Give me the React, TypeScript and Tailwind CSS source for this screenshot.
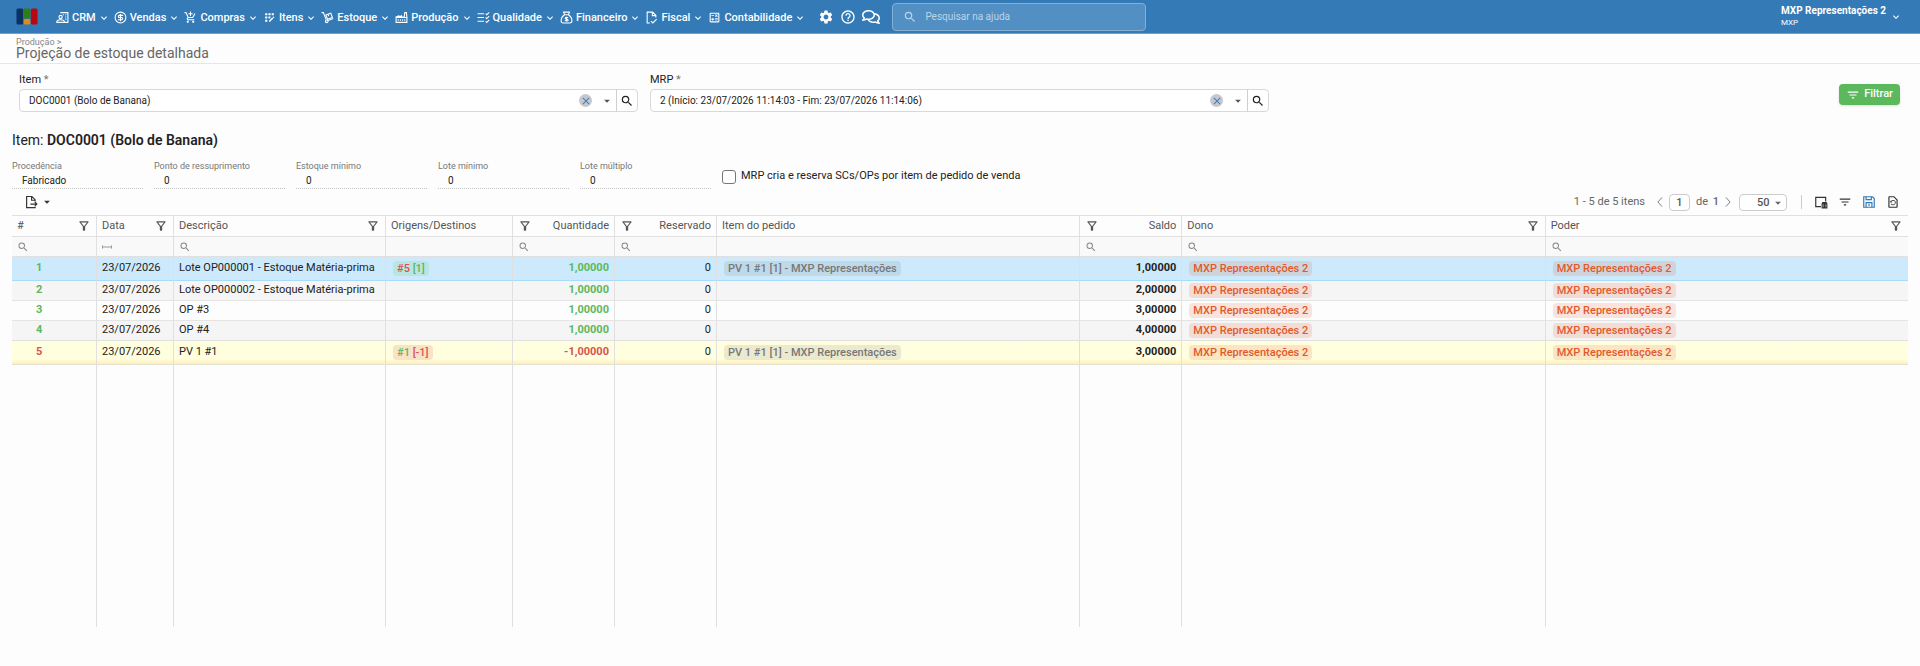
import type { ReactNode } from "react";
import {
  MdArrowDropDown,
  MdClose,
  MdFilterList,
  MdHelpOutline,
  MdKeyboardArrowDown,
  MdOutlineAddShoppingCart,
  MdOutlineAppRegistration,
  MdOutlineCalculate,
  MdOutlineFilterAlt,
  MdOutlineRestorePage,
  MdSearch,
  MdSettings,
} from "react-icons/md";
import { FaRegComments } from "react-icons/fa";
import { LuCircleDollarSign } from "react-icons/lu";

function Svg({ children, className = "size-[13px]" }: { children: ReactNode; className?: string }) {
  return (
    <svg
      viewBox="0 0 24 24"
      fill="none"
      stroke="currentColor"
      strokeWidth="2"
      className={className}
      aria-hidden="true"
    >
      {children}
    </svg>
  );
}

const CrmIcon = () => (
  <Svg>
    <path d="M8 3h14v18H14" />
    <circle cx="8.5" cy="11" r="3" />
    <path d="M1.5 21v-1c0-2.5 3.5-4 7-4s7 1.500 7 4v1z" />
    <path d="M12.500 7h2M17 7h2M17 11h2M17 15h2" />
  </Svg>
);

const TrolleyIcon = () => (
  <Svg>
    <path d="M1 3h3.500l5 13M13 17.500l9.500-3.500" />
    <circle cx="10.500" cy="19" r="2.500" />
    <path d="M9 7.500l9-3.500 3 8-9 3.300zM13 6l1.200 3.500" />
  </Svg>
);

const FactoryIcon = () => (
  <Svg>
    <path d="M2 21V11l5-2v2l5-2v2h5l1-8h3l1 8v10z" />
    <path d="M2 12h20M6 15v3M10 15v3M14 15v3M18 15v3" />
  </Svg>
);

const ChecksIcon = () => (
  <Svg>
    <path d="M1 5h12M1 12h12M1 19h12" />
    <path d="M16 5l2 2 4.500-4.500M16 12l2 2 4.500-4.500M16 19l2 2 4.500-4.500" />
  </Svg>
);

const MoneyBagIcon = () => (
  <Svg>
    <path d="M8.500 7L6.500 2h11l-2 5zM8.500 7C4 10 2 14 2 18c0 3 1.500 4 4 4h12c2.500 0 4-1 4-4 0-4-2-8-6.500-11" />
    <path d="M15 12.500c-1-1-5.500-1.200-5.500 1 0 2.500 5.500 1.200 5.500 3.500 0 2-4.500 2-6 .5M12 10.500v9" />
  </Svg>
);

const FiscalIcon = () => (
  <Svg>
    <path d="M9 22H4V2h10l6 6v4M13.500 2v6.500H20" />
    <path d="M11 18.500l3.500 3.500 7-7" />
  </Svg>
);

const ExportIcon = () => (
  <Svg className="size-3.5">
    <path d="M19 11V8l-5.500-5.500H4.500v19H19v-1.500M13 3v6h6" />
    <path d="M11 15.500h11M18.500 12l3.500 3.500-3.500 3.500" />
  </Svg>
);

const ColumnsIcon = () => (
  <Svg className="size-3.5">
    <path d="M12 20H3V4h17v7" />
    <path d="M14 15h8v7h-8zM15 13h6v1h-6zM17 15v7M19 15v7" />
  </Svg>
);

const SaveIcon = () => (
  <Svg className="size-3.5">
    <path d="M3 3h15l3 3v15H3z" />
    <path d="M7 3v5h9V3M7 21v-8h10v8" />
    <path d="M12 15v4" />
  </Svg>
);

const menus = [
  { label: "CRM", icon: <CrmIcon /> },
  { label: "Vendas", icon: <LuCircleDollarSign className="size-[13px]" /> },
  { label: "Compras", icon: <MdOutlineAddShoppingCart className="size-[13px]" /> },
  { label: "Itens", icon: <MdOutlineAppRegistration className="size-[13px]" /> },
  { label: "Estoque", icon: <TrolleyIcon /> },
  { label: "Produção", icon: <FactoryIcon /> },
  { label: "Qualidade", icon: <ChecksIcon /> },
  { label: "Financeiro", icon: <MoneyBagIcon /> },
  { label: "Fiscal", icon: <FiscalIcon /> },
  { label: "Contabilidade", icon: <MdOutlineCalculate className="size-[13px]" /> },
];

function Navbar() {
  return (
    <header className="flex h-[34px] items-center border-b border-[#8e98a8] bg-[#337ab7] pr-[18px] pl-4 text-white">
      <a href="#" aria-label="Início" className="mr-[18px]">
        <svg viewBox="0 0 23 17" preserveAspectRatio="none" className="h-[17px] w-[22px]" aria-hidden="true">
          <rect x="0.500" y="0.500" width="7" height="16" rx="1.500" fill="#0b3263" />
          <rect x="8" y="0.500" width="7" height="10" rx="1" fill="#2f7d15" />
          <rect x="8" y="11" width="7" height="5.500" rx="1.500" fill="#e08a1e" />
          <rect x="15.500" y="0.500" width="7" height="16" rx="1.500" fill="#b80713" />
        </svg>
      </a>
      <nav className="flex items-center gap-1 pt-0.5">
        {menus.map((m) => (
          <button key={m.label} type="button" className="flex items-center text-[11px] leading-4 font-medium">
            <span className="mr-[3px]">{m.icon}</span>
            {m.label}
            <MdKeyboardArrowDown className="ml-0.5 size-3" />
          </button>
        ))}
      </nav>
      <div className="ml-3 flex items-center gap-1.5">
        <button type="button" aria-label="Configurações">
          <MdSettings className="size-4" />
        </button>
        <button type="button" aria-label="Ajuda">
          <MdHelpOutline className="size-4" />
        </button>
        <button type="button" aria-label="Mensagens">
          <FaRegComments className="size-[18px]" />
        </button>
      </div>
      <label className="ml-3 flex h-7 w-[254px] items-center gap-2 rounded border border-[#85b0d6] bg-[#528fc3] px-2.5 text-[#bcd5ea]">
        <MdSearch className="size-3.5 shrink-0" />
        <input
          type="text"
          aria-label="Pesquisar na ajuda"
          placeholder="Pesquisar na ajuda"
          className="h-4 w-full text-[10px] leading-4 outline-none placeholder:text-[#bcd5ea]"
        />
      </label>
      <button type="button" className="ml-auto flex items-center gap-1 text-left">
        <span className="leading-3">
          <span className="block text-[10px] font-bold">MXP Representações 2</span>
          <span className="block text-[8px]">MXP</span>
        </span>
        <MdKeyboardArrowDown className="size-3" />
      </button>
    </header>
  );
}

function Combo({ id, label, value }: { id: string; label: string; value: string }) {
  return (
    <div className="w-[619px]">
      <label htmlFor={id} className="block text-[11px] leading-4">
        {label} <span className="text-[#777]">*</span>
      </label>
      <div className="mt-px flex h-[23px] items-stretch rounded border border-[#d8d8d8] bg-white">
        <input
          id={id}
          type="text"
          defaultValue={value}
          className="min-w-0 flex-1 pl-[9px] text-[10px] outline-none"
        />
        <button
          type="button"
          aria-label="Limpar"
          className="mr-2 flex size-[13px] items-center justify-center self-center rounded-full bg-[#c6c8cb] text-[#3f7fc4]"
        >
          <MdClose className="size-3" />
        </button>
        <button type="button" aria-label="Abrir lista" className="mr-0.5 text-[#555]">
          <MdArrowDropDown className="size-3.5" />
        </button>
        <button
          type="button"
          aria-label="Pesquisar"
          className="flex w-[21px] items-center justify-center border-l border-[#cfcfcf]"
        >
          <MdSearch className="size-3.5" />
        </button>
      </div>
    </div>
  );
}

const infos = [
  { id: "procedencia", label: "Procedência", value: "Fabricado" },
  { id: "ressuprimento", label: "Ponto de ressuprimento", value: "0" },
  { id: "estoque-minimo", label: "Estoque mínimo", value: "0" },
  { id: "lote-minimo", label: "Lote mínimo", value: "0" },
  { id: "lote-multiplo", label: "Lote múltiplo", value: "0" },
];

function ItemInfo() {
  return (
    <div className="mt-2.5 flex items-center gap-[11px]">
      {infos.map((f) => (
        <div key={f.id} className="w-[131px] border-b border-dotted border-[#c4c4c4]">
          <label htmlFor={f.id} className="block text-[9px] leading-3 text-[#777]">
            {f.label}
          </label>
          <input
            id={f.id}
            type="text"
            readOnly
            value={f.value}
            className="block h-4 w-full pl-2.5 text-[10px] outline-none"
          />
        </div>
      ))}
      <label className="mt-1 flex items-center gap-[5px] text-[11px]">
        <input
          type="checkbox"
          className="size-3.5 appearance-none rounded-[3px] border border-[#767676] bg-white"
        />
        MRP cria e reserva SCs/OPs por item de pedido de venda
      </label>
    </div>
  );
}

function GridToolbar() {
  return (
    <div className="flex h-[26px] items-center text-[#333]">
      <button type="button" aria-label="Exportar" className="ml-3 flex items-center gap-0.5">
        <ExportIcon />
        <MdArrowDropDown className="size-3.5" />
      </button>
      <div className="ml-auto flex items-center text-[11px] text-[#666]">
        1 - 5 de 5 itens
        <button type="button" aria-label="Página anterior" className="mr-1 ml-2.5">
          <Svg className="size-2.5">
            <path d="M17 1L7 12l10 11" />
          </Svg>
        </button>
        <input
          type="text"
          aria-label="Página"
          defaultValue="1"
          className="h-[17px] w-[21px] rounded border border-[#ccc] bg-white text-center font-medium text-[#555]"
        />
        <span className="ml-1.5">
          de <b className="ml-0.5 font-medium">1</b>
        </span>
        <button type="button" aria-label="Próxima página" className="mr-1.5 ml-1">
          <Svg className="size-2.5">
            <path d="M7 1l10 11L7 23" />
          </Svg>
        </button>
        <div className="relative">
          <select
            aria-label="Itens por página"
            className="block h-[17px] w-12 appearance-none rounded border border-[#ccc] bg-white pl-[17px] font-medium text-[#555]"
          >
            <option>50</option>
          </select>
          <MdArrowDropDown className="pointer-events-none absolute top-0.5 right-0.5 size-3.5" />
        </div>
      </div>
      <div className="ml-3.5 flex items-center gap-2.5 border-l border-[#ccc] pl-3">
        <button type="button" aria-label="Colunas">
          <ColumnsIcon />
        </button>
        <button type="button" aria-label="Filtros">
          <MdFilterList className="size-3.5" />
        </button>
        <button type="button" aria-label="Salvar" className="text-[#337ab7]">
          <SaveIcon />
        </button>
        <button type="button" aria-label="Restaurar" className="mr-2">
          <MdOutlineRestorePage className="size-3.5" />
        </button>
      </div>
    </div>
  );
}

// columns without a width share what is left of the table
const columns = [
  { title: "#", width: "w-[84px]", filter: true, search: "text" },
  { title: "Data", width: "w-[77px]", filter: true, search: "range" },
  { title: "Descrição", width: "w-[212px]", filter: true, search: "text" },
  { title: "Origens/Destinos", width: "w-[127px]" },
  { title: "Quantidade", width: "w-[102px]", filter: true, search: "text", right: true },
  { title: "Reservado", width: "w-[102px]", filter: true, search: "text", right: true },
  { title: "Item do pedido", width: "" },
  { title: "Saldo", width: "w-[102px]", filter: true, search: "text", right: true },
  { title: "Dono", width: "", filter: true, search: "text" },
  { title: "Poder", width: "", filter: true, search: "text" },
];

const GREEN = "text-[#5cb85c]";
const RED = "text-[#d9534f]";

const rows = [
  {
    n: 1,
    desc: "Lote OP000001 - Estoque Matéria-prima",
    origin: { ref: "#5", refColor: RED, qty: "[1]", qtyColor: GREEN, bg: "bg-[#bbe5e3]" },
    qty: "1,00000",
    order: true,
    saldo: "1,00000",
    style: "h-6 bg-[#cceafc] border-[#a6dcfa]",
  },
  {
    n: 2,
    desc: "Lote OP000002 - Estoque Matéria-prima",
    qty: "1,00000",
    saldo: "2,00000",
    style: "h-5 bg-[#f5f5f5] border-[#e4e4e4]",
  },
  { n: 3, desc: "OP #3", qty: "1,00000", saldo: "3,00000", style: "h-5 border-[#e4e4e4]" },
  { n: 4, desc: "OP #4", qty: "1,00000", saldo: "4,00000", style: "h-5 bg-[#f5f5f5] border-[#e0e0e0]" },
  {
    n: 5,
    desc: "PV 1 #1",
    origin: { ref: "#1", refColor: GREEN, qty: "[-1]", qtyColor: RED, bg: "bg-[#f9e2c6]" },
    qty: "-1,00000",
    order: true,
    saldo: "3,00000",
    style: "h-6 bg-linear-to-b from-[#fffede] from-75% to-[#ffecb5] border-[#e4e0d0]",
  },
];

const badge = "ml-0.5 inline-block h-[15px] rounded px-1 leading-[15px] align-middle font-medium";

function Owner() {
  return <span className={`${badge} bg-[#e2592b]/15 text-[#e2592b]`}>MXP Representações 2</span>;
}

function Grid() {
  const cell = "border-l border-[#e0e0e0] px-[5px] py-0 first:border-l-0";
  return (
    <table className="w-full table-fixed border-separate border-spacing-0 text-[11px] whitespace-nowrap">
      <thead>
        <tr className="h-[22px]">
          {columns.map((c) => (
            <th
              key={c.title}
              scope="col"
              className={`${cell} ${c.width} border-y text-left font-normal text-[#555]`}
            >
              <div className={`flex items-center justify-between ${c.right ? "flex-row-reverse" : ""}`}>
                {c.title}
                {c.filter && (
                  <button type="button" aria-label={`Filtrar ${c.title}`}>
                    <MdOutlineFilterAlt className="size-3.5" />
                  </button>
                )}
              </div>
            </th>
          ))}
        </tr>
        <tr className="h-5 bg-[#f9f9f9]">
          {columns.map((c) => (
            <td key={c.title} className={`${cell} border-b`}>
              {c.search && (
                <label className="flex items-center text-[#888]">
                  {c.search === "range" ? (
                    <Svg className="size-2.5 shrink-0">
                      <path d="M1 12h22M1 8v8M23 8v8" />
                    </Svg>
                  ) : (
                    <MdSearch className="size-3 shrink-0" />
                  )}
                  <input
                    type="text"
                    aria-label={`Buscar ${c.title}`}
                    className="h-3 w-full min-w-0 outline-none"
                  />
                </label>
              )}
            </td>
          ))}
        </tr>
      </thead>
      <tbody>
        {rows.map((r) => {
          const color = r.n === 5 ? RED : GREEN;
          const td = "border-b border-b-inherit border-l border-l-[#e0e0e0] px-[5px] py-0 first:border-l-0";
          return (
            <tr key={r.n} className={r.style}>
              <td className={`${td} text-center font-bold ${color}`}>
                <span className="mr-7 inline-block w-2 text-left">{r.n}</span>
              </td>
              <td className={td}>23/07/2026</td>
              <td className={td}>{r.desc}</td>
              <td className={td}>
                {r.origin && (
                  <span className={`${badge} ${r.origin.bg}`}>
                    <span className={r.origin.refColor}>{r.origin.ref}</span>{" "}
                    <span className={r.origin.qtyColor}>{r.origin.qty}</span>
                  </span>
                )}
              </td>
              <td className={`${td} text-right font-bold ${color}`}>{r.qty}</td>
              <td className={`${td} text-right`}>0</td>
              <td className={td}>
                {r.order && (
                  <span className={`${badge} bg-[#777]/15 text-[#777]`}>
                    PV 1 #1 [1] - MXP Representações
                  </span>
                )}
              </td>
              <td className={`${td} text-right font-bold`}>{r.saldo}</td>
              <td className={td}>
                <Owner />
              </td>
              <td className={td}>
                <Owner />
              </td>
            </tr>
          );
        })}
        <tr className="h-[262px]">
          {columns.map((c) => (
            <td key={c.title} className={cell} />
          ))}
        </tr>
      </tbody>
    </table>
  );
}

export default function App() {
  return (
    <div className="min-h-screen bg-[#fdfdfd] font-[Roboto,sans-serif] text-[#222]">
      <Navbar />
      <div className="h-[30px] border-b border-[#e6e6e6] px-4 pt-[3px] text-[#666]">
        <a href="#" className="block text-[9px] leading-[10px] text-[#888]">
          Produção &gt;
        </a>
        <h1 className="text-sm leading-3">Projeção de estoque detalhada</h1>
      </div>
      <form className="flex items-start gap-3 pt-2 pr-5 pl-[19px]">
        <Combo id="item" label="Item" value="DOC0001 (Bolo de Banana)" />
        <Combo id="mrp" label="MRP" value="2 (Início: 23/07/2026 11:14:03 - Fim: 23/07/2026 11:14:06)" />
        <button
          type="button"
          className="mt-3 ml-auto flex h-[21px] items-center gap-1 rounded bg-[#5cb85c] px-[7px] text-[11px] font-medium text-white shadow"
        >
          <MdFilterList className="size-3.5" />
          Filtrar
        </button>
      </form>
      <main className="px-3 pt-[18px]">
        <h2 className="text-sm leading-5">
          Item: <b className="font-semibold">DOC0001 (Bolo de Banana)</b>
        </h2>
        <ItemInfo />
        <GridToolbar />
        <Grid />
      </main>
    </div>
  );
}
